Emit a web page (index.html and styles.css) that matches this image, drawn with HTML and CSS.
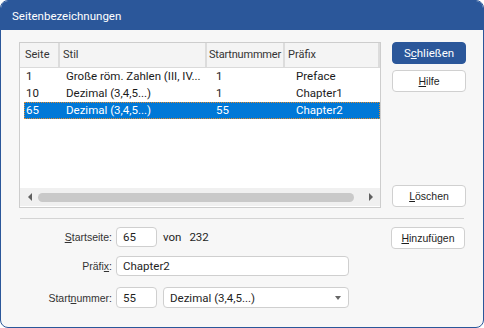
FILE: index.html
```html
<!DOCTYPE html>
<html lang="de">
<head>
  <meta charset="UTF-8">
  <title>Seitenbezeichnungen</title>
  <link rel="stylesheet" href="styles.css">
</head>
<body>
  <div class="window">
    <div class="titlebar">Seitenbezeichnungen</div>
    <div class="content">
      <div class="top">
        <div class="list">
          <div class="list-head">
            <div class="hcell c1">Seite</div>
            <div class="hcell c2">Stil</div>
            <div class="hcell c3">Startnummmer</div>
            <div class="hcell c4">Präfix</div>
          </div>
          <div class="rows">
            <div class="row">
              <span class="d1">1</span>
              <span class="d2">Große röm. Zahlen (III, IV...</span>
              <span class="d3">1</span>
              <span class="d4">Preface</span>
            </div>
            <div class="row">
              <span class="d1">10</span>
              <span class="d2">Dezimal (3,4,5...)</span>
              <span class="d3">1</span>
              <span class="d4">Chapter1</span>
            </div>
            <div class="row selected">
              <span class="d1">65</span>
              <span class="d2">Dezimal (3,4,5...)</span>
              <span class="d3">55</span>
              <span class="d4">Chapter2</span>
            </div>
          </div>
          <div class="hscroll">
            <span class="arrow left"></span>
            <div class="thumb"></div>
            <span class="arrow right"></span>
          </div>
        </div>
        <div class="side">
          <button class="btn primary">S<u>c</u>hließen</button>
          <button class="btn help"><u>H</u>ilfe</button>
          <button class="btn delete"><u>L</u>öschen</button>
        </div>
      </div>

      <div class="sep"></div>

      <div class="bottom">
        <div class="form">
          <label class="lbl"><u>S</u>tartseite:</label>
          <div class="field">
            <input class="txt short" type="text" value="65">
            <span class="of">von</span><span class="total">232</span>
          </div>
          <label class="lbl">Präfi<u>x</u>:</label>
          <div class="field">
            <input class="txt wide" type="text" value="Chapter2">
          </div>
          <label class="lbl third">Start<u>n</u>ummer:</label>
          <div class="field third">
            <input class="txt short tall" type="text" value="55">
            <div class="select">
              <span>Dezimal (3,4,5...)</span>
              <span class="caret"></span>
            </div>
          </div>
        </div>
        <button class="btn add"><u>H</u>inzufügen</button>
      </div>
    </div>
  </div>
</body>
</html>
```

FILE: styles.css
```css
body {
  margin: 0;
  font-family: Roboto, "Noto Sans", sans-serif;
  font-size: 11.5px;
  color: #1e1e1e;
}

.window {
  width: 484px;
  height: 328px;
  box-sizing: border-box;
  border: 1px solid #2b579a;
  border-radius: 8px;
  background: #f7f7f7;
  overflow: hidden;
}

.titlebar {
  height: 29px;
  line-height: 30px;
  padding-left: 11px;
  background: #2b579a;
  color: #fff;
  font-size: 11.5px;
}

.content {
  padding: 12px 17px 0 18px;
}

.top {
  display: flex;
  gap: 11px;
}

/* list view */
.list {
  width: 362px;
  height: 166px;
  box-sizing: border-box;
  border: 1px solid #cdcdcd;
  background: #fff;
  display: flex;
  flex-direction: column;
}

.list-head {
  display: flex;
  height: 24px;
  border-bottom: 1px solid #dadada;
  background: #f4f4f4;
  color: #333;
  font-size: 11px;
}

.hcell {
  line-height: 24px;
  border-right: 2px solid #dcdcdc;
  white-space: nowrap;
  overflow: hidden;
}

.c1 { width: 40px; padding-left: 5px; box-sizing: border-box; }
.c2 { width: 147px; padding-left: 3px; box-sizing: border-box; }
.c3 { width: 78px; padding-left: 2px; box-sizing: border-box; letter-spacing: -0.2px; }
.c4 { flex: 1; padding-left: 3px; }

.rows {
  flex: 1;
  padding-left: 4px;
}

.row {
  display: flex;
  height: 17px;
  line-height: 17px;
  white-space: nowrap;
  box-sizing: border-box;
  color: #1a1a1a;
}

.row span { padding-left: 2px; box-sizing: border-box; }
.d1 { width: 40px; }
.d2 { width: 150px; }
.d3 { width: 80px; }
.d4 { flex: 1; }

.row.selected {
  background: #0078d7;
  color: #fff;
  outline: 1px dotted #e08a2c;
  outline-offset: -1px;
}

.hscroll {
  height: 18px;
  margin-bottom: 1px;
  background: #f0f0f0;
  display: flex;
  align-items: center;
  padding: 0 7px 0 8px;
}

.thumb {
  flex: 1;
  height: 9px;
  margin: 0 15px 0 6px;
  border-radius: 5px;
  background: #c9c9c9;
}

.arrow {
  width: 0;
  height: 0;
  border-top: 4px solid transparent;
  border-bottom: 4px solid transparent;
}

.arrow.left { border-right: 4px solid #606060; }
.arrow.right { border-left: 4px solid #606060; }

/* buttons */
.side {
  display: flex;
  flex-direction: column;
  width: 74px;
  padding-bottom: 1px;
}

.btn {
  width: 74px;
  height: 22px;
  padding: 0;
  font-family: "Liberation Sans", Arial, sans-serif;
  font-size: 10.5px;
  color: #1e1e1e;
  background: #fff;
  border: 1px solid #d0d0d0;
  border-radius: 4px;
}

.btn.primary {
  font-family: Roboto, "Noto Sans", sans-serif;
  font-size: 11.5px;
  background: #2b579a;
  border-color: #2b579a;
  color: #fff;
}

.btn.help { margin-top: 6px; }
.btn.delete { margin-top: auto; }

.sep {
  height: 1px;
  margin: 10px 2px 0 1px;
  background: #d4d4d4;
}

/* form */
.bottom {
  display: flex;
  justify-content: space-between;
  padding-top: 8px;
}

.form {
  display: grid;
  grid-template-columns: 93px auto;
  column-gap: 4px;
  row-gap: 9px;
  align-items: center;
}

.lbl {
  text-align: right;
  color: #333;
  font-family: "Liberation Sans", Arial, sans-serif;
  font-size: 10.5px;
}

.third { margin-top: 2px; }

.field {
  display: flex;
  align-items: center;
}

.txt {
  height: 20px;
  box-sizing: border-box;
  padding: 0 6px;
  font-family: inherit;
  font-size: 11.5px;
  color: #1e1e1e;
  background: #fff;
  border: 1px solid #cfcfcf;
  border-radius: 4px;
}

.txt.short { width: 41px; }
.txt.wide { width: 233px; }
.txt.tall { height: 21px; }

.of { margin-left: 6px; }
.total { margin-left: 8px; }

.select {
  width: 186px;
  height: 21px;
  margin-left: 6px;
  box-sizing: border-box;
  padding: 0 7px 0 6px;
  background: #fff;
  border: 1px solid #cfcfcf;
  border-radius: 4px;
  display: flex;
  align-items: center;
  justify-content: space-between;
}

.caret {
  width: 0;
  height: 0;
  border-left: 3px solid transparent;
  border-right: 3px solid transparent;
  border-top: 4px solid #666;
}

.btn.add {
  margin-right: 1px;
  align-self: flex-start;
}
```
